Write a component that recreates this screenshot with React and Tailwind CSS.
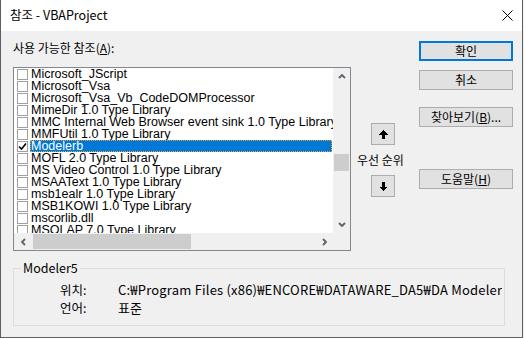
import React from "react";

const items = [
  { name: "Microsoft_JScript" },
  { name: "Microsoft_Vsa" },
  { name: "Microsoft_Vsa_Vb_CodeDOMProcessor" },
  { name: "MimeDir 1.0 Type Library" },
  { name: "MMC Internal Web Browser event sink 1.0 Type Library" },
  { name: "MMFUtil 1.0 Type Library" },
  { name: "Modelerb", checked: true, selected: true },
  { name: "MOFL 2.0 Type Library" },
  { name: "MS Video Control 1.0 Type Library" },
  { name: "MSAAText 1.0 Type Library" },
  { name: "msb1ealr 1.0 Type Library" },
  { name: "MSB1KOWI 1.0 Type Library" },
  { name: "mscorlib.dll" },
  { name: "MSOLAP 7.0 Type Library" },
];

const ui = { fontFamily: '"Noto Sans CJK KR", "Noto Sans", sans-serif' };
const listFont = { fontFamily: '"Liberation Sans", Arial, sans-serif' };

function Chevron({ dir }) {
  const pts = {
    up: "1,5 4,2 7,5",
    down: "1,2 4,5 7,2",
    left: "5,1 2,4 5,7",
    right: "2,1 5,4 2,7",
  }[dir];
  const vert = dir === "up" || dir === "down";
  return (
    <svg width={vert ? 8 : 7} height={vert ? 7 : 8} viewBox={vert ? "0 0 8 7" : "0 0 7 8"}>
      <polyline points={pts} fill="none" stroke="#606060" strokeWidth="1.8" />
    </svg>
  );
}

function Arrow({ down }) {
  return (
    <svg width="9" height="9" viewBox="0 0 9 9" shapeRendering="crispEdges" style={down ? { transform: "rotate(180deg)" } : undefined}>
      <path d="M4.5 0 L9 4.5 L6 4.5 L6 9 L3 9 L3 4.5 L0 4.5 Z" fill="#000" />
    </svg>
  );
}

function Btn({ children, primary }) {
  return (
    <button
      className={
        primary
          ? "w-full h-[20px] bg-[#e1e1e1] border-2 border-[#0078d7] text-[12px] leading-[14px] text-black"
          : "w-full h-[20px] bg-[#e1e1e1] border border-[#adadad] text-[12px] leading-[14px] text-black"
      }
      style={ui}
    >
      {children}
    </button>
  );
}

function Row({ item }) {
  return (
    <div className="h-[12px] flex items-center">
      <div className="ml-[3px] w-[11px] h-[11px] border border-[#a0a0a0] bg-white flex items-center justify-center shrink-0">
        {item.checked && (
          <svg width="9" height="9" viewBox="0 0 9 9">
            <polyline points="1,4.5 3.5,7 8,1.5" fill="none" stroke="#000" strokeWidth="1.6" />
          </svg>
        )}
      </div>
      <div
        className={
          item.selected
            ? "ml-[2px] mr-[1px] flex-1 h-[12px] pl-[1px] bg-[#0078d7] text-white outline outline-1 outline-dotted outline-[#f0a030] -outline-offset-1 whitespace-nowrap overflow-x-clip text-[12.5px] leading-[12px]"
            : "ml-[2px] mr-[1px] flex-1 h-[12px] pl-[1px] text-black whitespace-nowrap overflow-x-clip text-[12.5px] leading-[12px]"
        }
        style={listFont}
      >
        {item.name}
      </div>
    </div>
  );
}

export default function App() {
  return (
    <div className="w-[524px] h-[338px] bg-[#f0f0f0]">
      <div className="w-[523px] h-[338px] flex flex-col border-x border-b border-[#5f5f5f] bg-[#f0f0f0]" style={ui}>
        {/* title bar */}
        <div className="h-[31px] bg-white flex items-center justify-between pl-[9px] pr-[9px] shrink-0">
          <span className="text-[12.5px] text-black">참조 - VBAProject</span>
          <svg width="11" height="11" viewBox="0 0 11 11">
            <path d="M0.5 0.5 L10.5 10.5 M10.5 0.5 L0.5 10.5" stroke="#000" strokeWidth="1" />
          </svg>
        </div>

        <div className="flex-1 pl-[12px] pt-[10px]">
          <div className="flex">
            {/* left: list */}
            <div className="w-[338px] flex flex-col">
              <div className="h-[26px] text-[12px] leading-[13px] text-black">
                사용 가능한 참조(<span className="underline">A</span>):
              </div>
              <div className="h-[184px] border border-[#828790] bg-white flex flex-col">
                <div className="h-[165px] flex">
                  <div className="flex-1 overflow-hidden">
                    {items.map((it) => (
                      <Row key={it.name} item={it} />
                    ))}
                  </div>
                  <div className="w-[17px] bg-[#f0f0f0] flex flex-col items-center">
                    <div className="h-[17px] flex items-center justify-center">
                      <Chevron dir="up" />
                    </div>
                    <div className="flex-1 w-full px-[1px] pt-[69px]">
                      <div className="h-[17px] bg-[#cdcdcd]" />
                    </div>
                    <div className="h-[17px] flex items-center justify-center">
                      <Chevron dir="down" />
                    </div>
                  </div>
                </div>
                <div className="h-[17px] flex">
                  <div className="flex-1 bg-[#f0f0f0] flex items-center">
                    <div className="w-[18px] h-full flex items-center justify-center">
                      <Chevron dir="left" />
                    </div>
                    <div className="ml-[1px] w-[158px] h-[15px] bg-[#cdcdcd]" />
                    <div className="flex-1" />
                    <div className="w-[18px] h-full flex items-center justify-center">
                      <Chevron dir="right" />
                    </div>
                  </div>
                  <div className="w-[17px] bg-[#f0f0f0]" />
                </div>
              </div>
            </div>

            {/* middle: priority */}
            <div className="w-[68px] flex flex-col items-start pt-[82px]">
              <button className="ml-[20px] w-[24px] h-[22px] bg-[#e1e1e1] border border-[#adadad] flex items-center justify-center">
                <Arrow />
              </button>
              <div className="ml-[6px] h-[30px] flex items-center text-[12px] text-black whitespace-nowrap">우선 순위</div>
              <button className="ml-[20px] w-[24px] h-[22px] bg-[#e1e1e1] border border-[#adadad] flex items-center justify-center">
                <Arrow down />
              </button>
            </div>

            {/* right: buttons */}
            <div className="w-[94px] flex flex-col">
              <Btn primary>확인</Btn>
              <div className="mt-[5px]">
                <Btn>취소</Btn>
              </div>
              <div className="mt-[13px]">
                <Btn>
                  찾아보기(<span className="underline">B</span>)...
                </Btn>
              </div>
              <div className="mt-[38px]">
                <Btn>
                  도움말(<span className="underline">H</span>)
                </Btn>
              </div>
            </div>
          </div>

          {/* group box */}
          <div className="relative mt-[17px] w-[492px] h-[58px] border border-[#dcdcdc]">
            <span className="absolute -top-[9px] left-[7px] px-[2px] bg-[#f0f0f0] text-[12.5px] leading-[16px] text-black">
              Modeler5
            </span>
            <div className="pt-[12px] pl-[46px] text-[12.5px] text-black">
              <div className="h-[18px] flex items-center">
                <span className="w-[58px] shrink-0">위치:</span>
                <span className="w-[384px] overflow-hidden whitespace-nowrap text-[13px] tracking-[0.2px]">
                  C:₩Program Files (x86)₩ENCORE₩DATAWARE_DA5₩DA Modeler
                </span>
              </div>
              <div className="h-[18px] flex items-center">
                <span className="w-[58px] shrink-0">언어:</span>
                <span className="text-[13px]">표준</span>
              </div>
            </div>
          </div>
        </div>
      </div>
    </div>
  );
}
